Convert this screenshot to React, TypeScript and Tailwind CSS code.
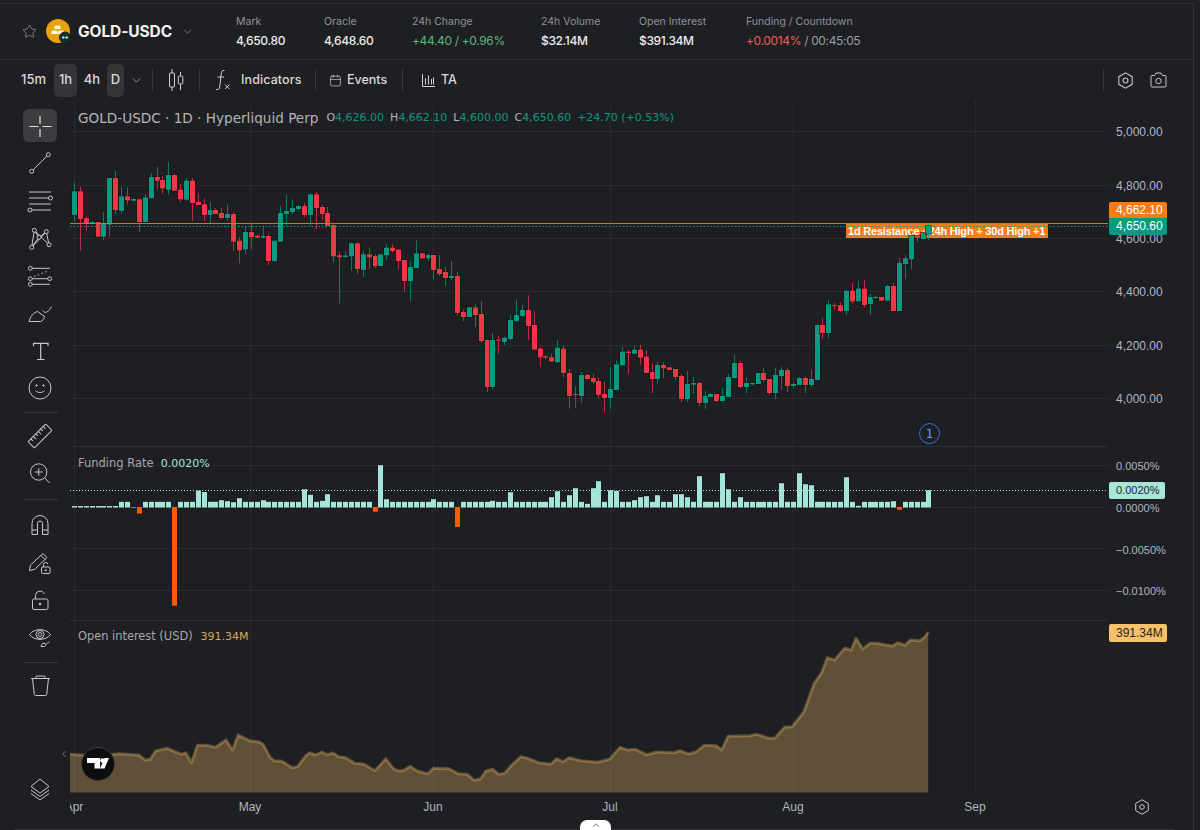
import { Star, ChevronDown, Calendar, ChevronUp, ChevronLeft } from "lucide-react";

// candle data: [bodyTop, bodyBottom, wickTop, wickBottom, green(1)/red(0)] in crop units
const seg1 = [
[124,195,98,215,1],[124,207,110,302,0],[205,220,200,243,0],[216,219,213,220,1],[216,260,216,260,0],[221,260,186,270,1],[84,224,84,260,1],[84,180,63,192,0],[139,183,110,192,1],[139,151,112,163,0],[147,152,145,155,1],[148,216,146,246,0],[142,216,133,216,1],[81,145,69,145,1],[81,93,51,119,0],[90,115,78,131,0],[75,119,36,133,1],[75,122,72,122,0],[119,148,102,156,0],[92,149,84,152,1],[92,159,84,213,0],[156,165,130,165,0],[163,195,145,213,0],[180,195,156,219,1],[180,192,174,192,0],[189,204,174,207,0],[192,204,163,213,1],[192,275,186,304,0],[272,301,262,340,0],[246,298,230,313,1],[246,261,222,298,0],[257,263,254,263,0],[258,263,229,266,1],[258,333,251,345,0],[272,333,272,336,1],[189,275,168,275,1],[183,192,133,228,1],[174,186,148,192,1],[168,177,165,178,1],[168,195,159,201,0],[133,195,130,228,1],[133,174,127,237,0],[171,192,165,210,0],[189,228,171,228,0],[225,319,222,337,0],[316,322,306,460,0],[316,321,304,324,1],[280,319,277,363,1],[280,357,277,372,0],[313,360,304,381,1],[313,322,292,357,0],
];
const seg2 = [
[78,108,72,114,0],[73,108,73,108,1],[53,76,43,91,1],[53,63,43,67,0],[59,93,59,120,0],[90,153,90,186,0],[111,153,93,213,1],[70,114,31,114,1],[70,85,70,85,0],[75,85,72,93,1],[75,120,75,147,0],[117,132,75,138,0],[126,144,111,168,0],[138,144,93,150,1],[138,249,126,255,0],[246,261,238,273,0],[232,261,232,261,1],[232,255,223,291,0],[252,333,214,339,0],[330,471,328,486,0],[330,471,309,477,1],[329,332,318,372,0],[323,336,320,345,1],[270,327,255,330,1],[255,273,208,276,1],[240,258,223,261,1],[240,288,196,330,0],[285,359,244,359,0],[356,382,350,410,0],[379,383,374,387,0],[382,394,371,396,0],[353,397,330,397,1],[356,429,347,441,0],[429,498,417,536,0],[492,495,468,533,1],[435,498,426,519,1],[435,447,432,447,0],[444,456,432,462,0],[453,495,444,504,0],[492,504,456,548,0],[477,504,411,537,1],[403,480,391,480,1],[365,406,350,406,1],[365,369,360,432,0],[359,371,345,371,1],[359,383,344,404,0],[380,429,362,429,0],[426,447,400,489,0],[405,447,396,462,1],[405,415,396,444,0],[412,420,412,420,0],
];
const seg3 = [
[507,531,507,540,0],[528,597,522,606,0],[552,597,513,606,1],[549,554,531,582,1],[549,609,546,618,0],[588,609,573,627,1],[582,591,579,591,1],[582,603,582,606,0],[588,603,564,609,1],[531,591,522,591,1],[489,534,463,534,1],[489,561,483,564,0],[549,561,531,579,1],[549,553,549,556,1],[519,552,519,552,1],[519,540,504,546,0],[537,579,537,585,0],[525,579,504,597,1],[510,528,501,570,1],[510,558,504,576,0],[552,558,549,564,1],[534,555,531,555,1],[534,555,531,579,0],[537,555,510,561,1],[375,540,372,540,1],[375,399,354,417,0],[313,399,301,414,1],[315,318,309,327,0],[316,333,307,336,0],[272,333,270,345,1],[272,304,249,310,0],[266,304,243,304,1],[266,315,240,321,0],[291,312,282,345,1],[291,294,288,297,1],[291,302,291,302,0],[258,302,255,302,1],[258,333,249,333,0],[189,333,174,333,1],[175,192,165,237,1],[108,178,96,207,1],[108,114,108,126,0],[99,117,99,117,1],[78,102,69,120,1],
];
const conv = (s: number[][], base: number) => s.map(([a, b, c, d, g]) => ({ t: base + a / 3, b: base + b / 3, wt: base + c / 3, wb: base + d / 3, g }));
const candles = [...conv(seg1, 150), ...conv(seg2, 230), ...conv(seg3, 200)].map((c, i) => ({ ...c, x: Math.round(74 + i * 5.893) }));

const rep = (n: number, v: number) => Array(n).fill(v) as number[];
const a = 5.7;
const funding = [
  ...rep(8, 1.5), a, a, 0.5, -6.5, ...rep(5, a), -98.7, ...rep(3, a), 17, 15.5, a, a, 7.3, 6.3, 5.3, 9.3, ...rep(3, a), 7.3, ...rep(6, a), 18.3, 12.7, a, 6.7, 13.3, ...rep(7, a), -4.7, 42.3, 8.3, ...rep(7, a), 8.3, ...rep(3, a), -20, ...rep(5, a), 6.7, a, a, 15.3,
  ...rep(6, a), 10.3, 16.3, a, 12.3, 19.3, a, 3.7, 19.3, 26.3, a, 17.3, 16.7, a, a, 7.3, 10.3, 11.3, a, 12.3, a, a, 13.3, 13.3, 10.3, a, 31.3, a, a, a, 34.3, 18.3, a, 10.3, ...rep(6, a), 24.3, a, a, 34.3, 23.3, 22.3, ...rep(5, a), 30.3, a, 1.7, ...rep(5, a), 6.3, -2.7, ...rep(4, a), 17.3,
];

const oi1 = [[28,403],[60,405],[100,408],[130,405],[165,401],[220,405],[238,420],[252,418],[268,393],[300,385],[340,403],[352,398],[368,428],[385,376],[410,376],[435,382],[465,360],[483,390],[499,345],[530,362],[555,365],[568,372],[590,415],[600,422],[622,424],[650,443],[665,440],[690,405],[700,398],[715,405],[733,396],[748,404],[765,399],[780,410],[800,413],[825,430],[850,432],[882,452],[912,416],[935,448],[950,453],[965,450],[980,439],[1000,453],[1030,461],[1045,445],[1090,446],[1115,461],[1140,463],[1160,481],[1178,476],[1192,453],[1212,448],[1228,463],[1245,460],[1265,435],[1290,410],[1310,415],[1340,428],[1375,433],[1390,416],[1408,425],[1425,413],[1460,422],[1505,427],[1540,417]];
const oi2 = [[0,382],[20,390],[42,388],[72,404],[100,396],[145,398],[162,392],[185,402],[205,396],[228,376],[260,377],[275,390],[292,349],[350,347],[370,343],[400,354],[418,355],[445,322],[465,320],[497,275],[525,190],[545,158],[560,113],[580,120],[607,85],[625,90],[638,55],[656,87],[675,70],[695,70],[735,78],[752,68],[770,76],[785,60],[810,62],[823,52],[833,36]];
const oiPts = [...oi1.map(([x, y]) => [60 + x / 2.8, 620 + y / 3]), ...oi2.map(([x, y]) => [620 + x / 2.703, 620 + y / 3])];
const oiLine = oiPts.map(([x, y]) => `${x.toFixed(1)},${y.toFixed(1)}`).join(" ");
const oiArea = `70,792.5 ${oiLine} 928.2,792.5`;

const months = [74, 250, 433, 610, 793, 975];

function Candles({ from, to }: { from: number; to: number }) {
  return (
    <>
      {candles.slice(from, to).map((c, i) => {
        const col = c.g ? "#089981" : "#f23645";
        return (
          <g key={i}>
            <rect x={c.x - 3} y={c.t - 1} width={7} height={Math.max(c.b - c.t, 1) + 2} fill="#111214" fillOpacity={0.55} />
            <line x1={c.x + 0.5} x2={c.x + 0.5} y1={c.wt} y2={c.wb} stroke={col} strokeOpacity={0.72} />
            <rect x={c.x - 2} y={c.t} width={5} height={Math.max(c.b - c.t, 1)} fill={col} />
          </g>
        );
      })}
    </>
  );
}

function VGrid({ y1, y2 }: { y1: number; y2: number }) {
  return (
    <>
      {months.map((x) => (
        <line key={x} x1={x + 0.5} x2={x + 0.5} y1={y1} y2={y2} stroke="#292b2e" />
      ))}
    </>
  );
}

function HGrid({ ys }: { ys: number[] }) {
  return (
    <>
      {ys.map((y) => (
        <line key={y} x1={70} x2={1108} y1={y + 0.5} y2={y + 0.5} stroke="#292b2e" />
      ))}
    </>
  );
}

function AxisLabel({ y, top, small, children }: { y: number; top: number; small?: boolean; children: React.ReactNode }) {
  return (
    <div
      className={`absolute left-[8px] ${small ? "text-[11px]" : "text-[12px]"} leading-[16px] text-[#b2b5be] whitespace-nowrap font-['Liberation_Sans',sans-serif]`}
      style={{ top: y - top - 7 }}
    >
      {children}
    </div>
  );
}

const ic = { fill: "none", stroke: "#c6c8cb", strokeWidth: 1 } as const;

function Tool({ children, active }: { children: React.ReactNode; active?: boolean }) {
  return (
    <div className="h-[37.5px] flex items-center justify-center">
      <div className={`w-[34px] h-[33px] rounded-[6px] flex items-center justify-center ${active ? "bg-[#3b3c3e]" : ""}`}>
        <svg width="28" height="28" viewBox="0 0 28 28" {...ic}>
          {children}
        </svg>
      </div>
    </div>
  );
}

function Sep({ h }: { h: string }) {
  return (
    <div className={`flex items-center justify-center ${h}`}>
      <div className="w-[35px] h-px bg-[#3a3b3e]" />
    </div>
  );
}

function LeftTools() {
  return (
    <div className="w-[70px] shrink-0 flex flex-col pt-[6px] pb-[21px] pl-[10px]">
      <Tool active>
        <path d="M14 4v8M14 17v8M3.5 14.5h9M16.500 14.500h9" stroke="#e2e3e5" strokeWidth="1.2" />
      </Tool>
      <Tool>
        <circle cx="22.300" cy="5.700" r="2" />
        <circle cx="5.700" cy="22.300" r="2" />
        <path d="M7.200 20.800 20.800 7.200" />
      </Tool>
      <Tool>
        <path d="M3 5h22M3 11h20M3 17h22M6 23h19" />
        <circle cx="24.500" cy="11" r="2" fill="#1e1f22" />
        <circle cx="4" cy="23" r="2" fill="#1e1f22" />
      </Tool>
      <Tool>
        <path d="M5.700 23.300 8.300 6.300 23 20.700 20.300 7.700Z M8.300 6.300 13 13.300M5.700 23.300 13 13.300M20.300 7.700 13 13.300" />
        <circle cx="8.300" cy="6.300" r="2" fill="#1e1f22" />
        <circle cx="20.300" cy="7.700" r="2" fill="#1e1f22" />
        <circle cx="13" cy="13.300" r="2" fill="#1e1f22" />
        <circle cx="5.700" cy="23.300" r="2" fill="#1e1f22" />
        <circle cx="23" cy="20.700" r="2" fill="#1e1f22" />
      </Tool>
      <Tool>
        <path d="M6 6.300h18M6 16.700h16M6 22.300h18" />
        <path d="M8 14.500 22 9" strokeDasharray="1.500 2.500" />
        <circle cx="4.300" cy="6.300" r="1.900" />
        <circle cx="4.300" cy="16.700" r="1.900" />
        <circle cx="23.700" cy="16.700" r="1.900" />
        <circle cx="4.300" cy="22.300" r="1.900" />
      </Tool>
      <Tool>
        <path d="M3 22.500C4 18 7.500 13.500 11.500 12.500L18.500 17.500C18 20 16.500 22 14.500 22.500Z" />
        <path d="M17 11.500c1.500 3.500 5.500 2 8.500-4" />
      </Tool>
      <Tool>
        <path d="M7.500 9V6.300H22V9M14.700 6.300V22.500M11 22.500H18.500" strokeWidth="1.200" />
      </Tool>
      <Tool>
        <circle cx="14" cy="14" r="11" />
        <circle cx="10.500" cy="11.500" r="0.700" fill="#c6c8cb" />
        <circle cx="17.500" cy="11.500" r="0.700" fill="#c6c8cb" />
        <path d="M9.500 16.500c2 2.700 7 2.700 9 0" />
      </Tool>
      <Sep h="h-[10px]" />
      <Tool>
        <g transform="rotate(-45 14 14)">
          <rect x="1.500" y="9.500" width="25" height="9" rx="0.500" />
          <path d="M5.500 9.500v3M9 9.500v4M12.500 9.500v3M16 9.500v4M19.500 9.500v3M23 9.500v3" />
        </g>
      </Tool>
      <Tool>
        <circle cx="12.700" cy="13" r="8.200" />
        <path d="M12.700 9.200v7.600M8.900 13h7.600M18.800 19l4.700 5" />
      </Tool>
      <Sep h="h-[14px]" />
      <Tool>
        <path d="M6 23.500V12.500a8 8 0 0 1 16 0v11h-5.500V12.500a2.500 2.500 0 0 0-5 0v11Z" />
        <path d="M6 19h5.500M16.500 19H22" />
      </Tool>
      <Tool>
        <path d="M3.500 22.500 4.500 17 17 5.500 21 9.500 8.500 21.500Z M15 7.500 19 11.500" />
        <rect x="15.500" y="19" width="8.500" height="6.500" rx="1" />
        <path d="M17.500 19v-2.500a2.200 2.200 0 0 1 4.300-.5" />
        <circle cx="19.700" cy="22.300" r="0.600" fill="#c6c8cb" />
      </Tool>
      <Tool>
        <rect x="6.500" y="13" width="15.500" height="10.500" rx="1.500" />
        <path d="M9.500 13V9.500a4.500 4.500 0 0 1 8.700-1.500" />
        <circle cx="14" cy="18" r="0.900" fill="#c6c8cb" />
      </Tool>
      <Tool>
        <path d="M3.500 11.500C8 5 20 5 24.500 11.500 20 18 8 18 3.500 11.500Z" />
        <circle cx="14" cy="11.500" r="4" />
        <circle cx="14" cy="11.500" r="1.900" />
        <path d="M15 23.500c.300-2 1.500-3 3-3.500l2 1.300c-.200 1.300-1 2-2 2.200ZM20.500 20c1 .700 2-.200 3-1.500" />
      </Tool>
      <Sep h="h-[12px]" />
      <Tool>
        <path d="M5 5.500h19M10 5.500V3.500a.500.500 0 0 1 .500-.500h8a.500.500 0 0 1 .500.500v2M6.500 5.500 8.300 21.500c0 .500.500 1 1 1h10.400c.500 0 1-.500 1-1l1.800-16" />
      </Tool>
      <div className="mt-auto">
        <Tool>
          <path d="M14 4 23 11.500 14 18 5 11.500Z" />
          <path d="M5 15 14 21.500 23 15M5 18.500 14 25 23 18.500" />
        </Tool>
      </div>
    </div>
  );
}

function Stat({ w, label, children }: { w: string; label: string; children: React.ReactNode }) {
  return (
    <div className={`${w} shrink-0 flex flex-col`}>
      <div className="text-[10.500px] leading-[14px] text-[#8e9298]">{label}</div>
      <div className="mt-[4px] text-[12px] tracking-[-0.35px] leading-[15px] font-medium text-[#eceded] whitespace-nowrap">{children}</div>
    </div>
  );
}

function VBar() {
  return <div className="w-px h-[22px] bg-[#3a3b3e] shrink-0" />;
}

function Hex({ size = 16 }: { size?: number }) {
  return (
    <svg width={size} height={size} viewBox="0 0 16 16" fill="none" stroke="#c6c8cb" strokeWidth="1">
      <path d="M8 .8 14.300 4.400V11.600L8 15.200 1.700 11.600V4.400Z" />
      <circle cx="8" cy="8" r="2.300" />
    </svg>
  );
}

export default function App() {
  return (
    <div className="w-[1200px] h-[830px] relative overflow-hidden bg-[#1e1f22] text-white pt-[3px] font-['Inter',sans-serif]">
      <div className="w-[1194px] h-[827px] border-r border-[#303134] flex flex-col">
        {/* header */}
        <div className="h-[57px] shrink-0 border-y border-[#303134] flex items-center">
          <div className="w-[236px] shrink-0 flex items-center pl-[22px]">
            <Star size={15} strokeWidth={1.1} className="text-[#a4a7ac]" />
            <svg className="ml-[9px] shrink-0" width="25" height="25" viewBox="0 0 25 25">
              <circle cx="12" cy="12" r="12" fill="#e6a20b" />
              <path d="M9 6.500h5l1 3.500H8ZM6 11.500h5l1 3.500H5ZM12.500 11.500h5l1 3.500h-7Z" fill="#fdf3d8" />
              <circle cx="19" cy="18.500" r="5.500" fill="#15302c" stroke="#1e1f22" />
              <path d="M15.800 18.500c1-2 1.800-1.500 3.200 0s2.200 2 3.200 0c-1 -2 -1.800-1.500-3.200 0s-2.200 2-3.200 0Z" fill="#8ff0d6" />
            </svg>
            <span className="ml-[7px] text-[15.500px] font-bold text-[#f2f3f3] leading-none tracking-[-0.1px]">GOLD-USDC</span>
            <ChevronDown size={13} strokeWidth={1.3} className="ml-[9px] text-[#8e9298]" />
          </div>
          <div className="flex items-start">
            <Stat w="w-[88px]" label="Mark">4,650.80</Stat>
            <Stat w="w-[88px]" label="Oracle">4,648.60</Stat>
            <Stat w="w-[129px]" label="24h Change">
              <span className="text-[#55b97c] font-normal">+44.40 / +0.96%</span>
            </Stat>
            <Stat w="w-[98px]" label="24h Volume">$32.14M</Stat>
            <Stat w="w-[107px]" label="Open Interest">$391.34M</Stat>
            <Stat w="w-[200px]" label="Funding / Countdown">
              <span className="text-[#ec5f52] font-normal">+0.0014%</span>
              <span className="text-[#9a9ea5] font-normal"> / 00:45:05</span>
            </Stat>
          </div>
        </div>

        {/* toolbar */}
        <div className="h-[41px] shrink-0 flex items-center pb-[1px] text-[13px] font-medium text-[#d8d9db]">
          <span className="ml-[21px] w-[33px]">15m</span>
          <span className="w-[23px] h-[33px] rounded-[5px] bg-[#343537] flex items-center justify-center">1h</span>
          <span className="w-[30px] text-center">4h</span>
          <span className="w-[17px] h-[33px] rounded-[5px] bg-[#343537] flex items-center justify-center">D</span>
          <ChevronDown size={13} strokeWidth={1.4} className="ml-[6px] text-[#b2b5be]" />
          <span className="ml-[9px]"><VBar /></span>
          <svg className="ml-[15px]" width="17" height="22" viewBox="0 0 17 22" fill="none" stroke="#d0d1d4" strokeWidth="1">
            <path d="M4 0v22M12.500 3v18" />
            <rect x="1.500" y="4" width="5" height="14" rx="1" fill="#1e1f22" />
            <rect x="10.300" y="7" width="4.500" height="8" rx="1" fill="#1e1f22" />
          </svg>
          <span className="ml-[14px]"><VBar /></span>
          <svg className="ml-[15px]" width="16" height="22" viewBox="0 0 16 22" fill="none" stroke="#d0d1d4" strokeWidth="1">
            <path d="M9.500 1.500C7 1 6.500 2.500 6.200 5L4.800 17.500C4.500 20 3.500 21 1 20.500M2.500 8H9M10 15.500l4.500 4.500M14.500 15.500 10 20" />
          </svg>
          <span className="ml-[10px] w-[61px] text-[12.500px] tracking-[0.1px]">Indicators</span>
          <span className="ml-[13px]"><VBar /></span>
          <Calendar size={13} strokeWidth={1.2} className="ml-[13px]" />
          <span className="ml-[5px] w-[38px] text-[12.500px]">Events</span>
          <span className="ml-[17px]"><VBar /></span>
          <svg className="ml-[19px]" width="13" height="13" viewBox="0 0 13 13" fill="none" stroke="#d0d1d4" strokeWidth="1">
            <path d="M.5 0v12.500H13M3.500 4v6.500M6.500 1.500v9M9.500 5v5.500M11.500 3.500v7" />
          </svg>
          <span className="ml-[6px] text-[12.500px]">TA</span>
          <span className="ml-auto"><VBar /></span>
          <span className="ml-[13px]"><Hex size={17} /></span>
          <svg className="ml-[16px] mr-[26px]" width="17" height="16" viewBox="0 0 17 16" fill="none" stroke="#c6c8cb" strokeWidth="1">
            <path d="M1 4.500a1 1 0 0 1 1-1h2.500L6 1h5l1.500 2.500H15a1 1 0 0 1 1 1V14a1 1 0 0 1-1 1H2a1 1 0 0 1-1-1Z" />
            <circle cx="8.500" cy="9" r="2.700" />
          </svg>
        </div>

        {/* body */}
        <div className="flex-1 min-h-0 flex">
          <LeftTools />
          <div className="flex-1 flex flex-col">
            {/* main pane */}
            <div className="h-[346px] shrink-0 flex">
              <div className="relative w-[1038px] border-b border-[#303134]">
                <svg className="absolute top-0 left-0 w-[1038px] h-[346px]" viewBox="70 101 1038 346">
                  <VGrid y1={101} y2={446} />
                  <HGrid ys={[131, 185, 238, 291, 345, 398]} />
                  <Candles from={0} to={142} />
                </svg>
                <div className="absolute left-[776px] top-[123px] w-[202px] h-[14px] bg-[#f97b16] text-white text-[11px] leading-[14px] font-bold pl-[2px] whitespace-nowrap tracking-[-0.2px] font-['Liberation_Sans',sans-serif]">
                  1d Resistance · 24h High + 30d High +1
                </div>
                <svg className="absolute top-0 left-0 w-[1038px] h-[346px]" viewBox="70 101 1038 346">
                  <Candles from={142} to={146} />
                  <line x1={70} x2={1108} y1={223.5} y2={223.5} stroke="#c9752f" />
                  <line x1={70} x2={1108} y1={226.5} y2={226.5} stroke="#0f9a84" strokeDasharray="1.500 2" />
                </svg>
                <div className="absolute left-[8px] top-[8px] flex items-center h-[18px] whitespace-nowrap font-['DejaVu_Sans',sans-serif]">
                  <span className="text-[13.600px] text-[#b4b5b8]">GOLD-USDC · 1D · Hyperliquid Perp</span>
                  <div className="ml-[8px] flex gap-[6px] text-[11px] text-[#089981]">
                    <span><span className="text-[#b2b5be]">O</span>4,626.00</span>
                    <span><span className="text-[#b2b5be]">H</span>4,662.10</span>
                    <span><span className="text-[#b2b5be]">L</span>4,600.00</span>
                    <span><span className="text-[#b2b5be]">C</span>4,650.60</span>
                    <span>+24.70 (+0.53%)</span>
                  </div>
                </div>
                <div className="absolute left-[849px] top-[322px] w-[21px] h-[21px] rounded-full border-[1.5px] border-[#2f74f0] flex items-center justify-center text-[12px] text-[#6d9cf5] font-['DejaVu_Sans',sans-serif]">
                  1
                </div>
              </div>
              <div className="relative w-[84px]">
                {[["5,000.00", 131], ["4,800.00", 185], ["4,600.00", 238], ["4,400.00", 291], ["4,200.00", 345], ["4,000.00", 398]].map(([t, y]) => (
                  <AxisLabel key={t as string} y={y as number} top={101}>{t}</AxisLabel>
                ))}
                <div className="absolute left-[1px] top-[101px] w-[58px] h-[16px] rounded-t-[2px] bg-[#f97b16] pl-[7px] text-[12px] leading-[16px] font-['Liberation_Sans',sans-serif] text-white">4,662.10</div>
                <div className="absolute left-[1px] top-[117px] w-[58px] h-[17px] rounded-b-[2px] bg-[#089981] pl-[7px] text-[12px] leading-[17px] font-['Liberation_Sans',sans-serif] text-white">4,650.60</div>
              </div>
            </div>

            {/* funding pane */}
            <div className="h-[174px] shrink-0 flex">
              <div className="relative w-[1038px] border-b border-[#303134]">
                <svg className="absolute top-0 left-0 w-[1038px] h-[174px]" viewBox="70 447 1038 174">
                  <VGrid y1={447} y2={620} />
                  <HGrid ys={[465, 507, 548, 590]} />
                  <line x1={70} x2={1108} y1={490.5} y2={490.5} stroke="#a4e4d9" strokeDasharray="1 2" />
                  {funding.map((h, i) => {
                    const x = Math.round(74 + i * 5.893) - 2;
                    return h >= 0 ? (
                      <g key={i}>
                        <rect x={x} y={507.5 - h - 1} width={5} height={1} fill="#111214" fillOpacity={0.6} />
                        <rect x={x} y={507.5 - h} width={5} height={h} fill="#a4e4d9" />
                      </g>
                    ) : (
                      <rect key={i} x={x} y={507} width={5} height={-h} fill="#ff5a00" />
                    );
                  })}
                </svg>
                <div className="absolute left-[8px] top-[9px] h-[16px] flex items-center text-[11.500px] whitespace-nowrap font-['DejaVu_Sans',sans-serif]">
                  <span className="text-[#a5a7ab]">Funding Rate</span>
                  <span className="ml-[7px] text-[11px] text-[#a4e4d9]">0.0020%</span>
                </div>
              </div>
              <div className="relative w-[84px]">
                {[["0.0050%", 465], ["0.0000%", 507], ["−0.0050%", 549], ["−0.0100%", 590]].map(([t, y]) => (
                  <AxisLabel key={t as string} y={y as number} top={447} small>{t}</AxisLabel>
                ))}
                <div className="absolute left-[1px] top-[35px] w-[56px] h-[17px] rounded-[2px] bg-[#a8e6da] pl-[7px] text-[11px] leading-[17px] font-['Liberation_Sans',sans-serif] text-[#1e1f22]">0.0020%</div>
              </div>
            </div>

            {/* open interest pane */}
            <div className="h-[172px] shrink-0 flex">
              <div className="relative w-[1038px]">
                <svg className="absolute top-0 left-0 w-[1038px] h-[172px]" viewBox="70 621 1038 172">
                  <VGrid y1={621} y2={792} />
                  <polygon points={oiArea} fill="#f7c26b" fillOpacity={0.3} />
                  <polyline points={oiLine} fill="none" stroke="#f7c26b" strokeOpacity={0.32} strokeWidth={3} strokeLinejoin="round" />
                </svg>
                <div className="absolute left-[8px] top-[8px] h-[16px] flex items-center text-[11.400px] whitespace-nowrap font-['DejaVu_Sans',sans-serif]">
                  <span className="text-[#a5a7ab]">Open interest (USD)</span>
                  <span className="ml-[8px] text-[11px] text-[#dba65a]">391.34M</span>
                </div>
                <div className="absolute left-[11px] top-[126px] w-[34px] h-[34px] rounded-full bg-[#0d0d0d] border border-[#3a3b3e] flex items-center justify-center">
                  <svg width="22" height="12" viewBox="0 0 22 12">
                    <path d="M0 0h13v10.500H7.500V5H0Z" fill="#fff" />
                    <circle cx="15.500" cy="2.500" r="2.300" fill="#fff" />
                    <path d="M17.500 0H22l-4.500 10.500H13Z" fill="#fff" />
                  </svg>
                </div>
                <ChevronLeft size={10} strokeWidth={1.4} className="absolute left-[-11px] top-[128px] text-[#b2b5be]" />
              </div>
              <div className="relative w-[84px]">
                <div className="absolute left-[1px] top-[3px] w-[58px] h-[18px] rounded-[2px] bg-[#f7c26b] pl-[7px] text-[12px] leading-[18px] font-['Liberation_Sans',sans-serif] text-[#1e1f22]">391.34M</div>
              </div>
            </div>

            {/* time axis */}
            <div className="h-[32px] shrink-0 flex">
              <div className="relative w-[1038px] overflow-hidden text-[12px] leading-[16px] text-[#b2b5be] font-['Liberation_Sans',sans-serif]">
                {[["Apr", 74], ["May", 250], ["Jun", 433], ["Jul", 610], ["Aug", 793], ["Sep", 975]].map(([t, x]) => (
                  <span key={t as string} className="absolute top-[6px] -translate-x-1/2" style={{ left: (x as number) - 70 }}>{t}</span>
                ))}
              </div>
              <div className="w-[84px] flex items-start pl-[26px] pt-[6px]">
                <Hex size={16} />
              </div>
            </div>
          </div>
        </div>
        <div className="ml-[15px] w-[1160px] h-px bg-[#303134] shrink-0" />
      </div>

      <div className="absolute left-[580px] bottom-0 w-[31px] h-[10px] rounded-t-[7px] bg-white flex items-start justify-center">
        <ChevronUp size={10} strokeWidth={1.6} className="text-[#26282b]" />
      </div>
    </div>
  );
}
